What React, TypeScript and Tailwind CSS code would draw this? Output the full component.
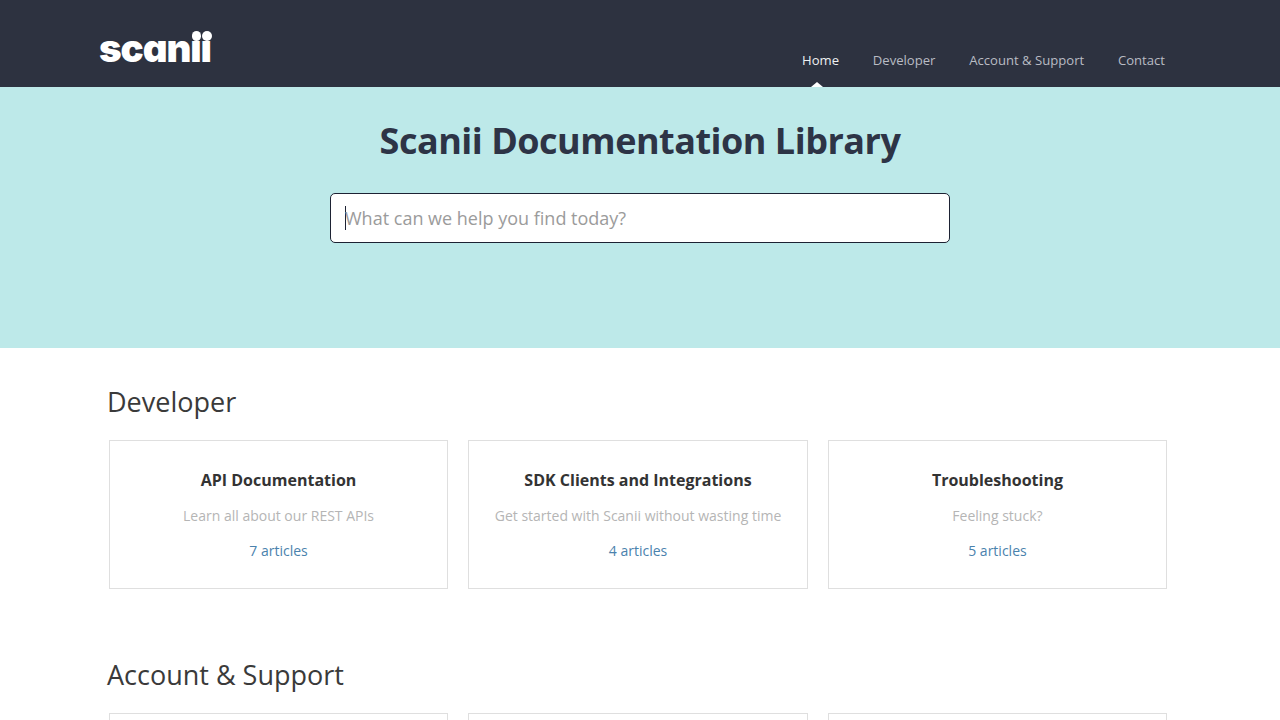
import React from 'react'

const navItems = ['Home', 'Developer', 'Account & Support', 'Contact']

type CardData = { title: string; text: string; count: string }

const developerCards: CardData[] = [
    { title: 'API Documentation', text: 'Learn all about our REST APIs', count: '7 articles' },
    { title: 'SDK Clients and Integrations', text: 'Get started with Scanii without wasting time', count: '4 articles' },
    { title: 'Troubleshooting', text: 'Feeling stuck?', count: '5 articles' },
]

function Card({ title, text, count }: CardData) {
    return (
        <div className="h-[149px] border border-[#dfdfdf] pt-[27px] text-center">
            <h3 className="text-[16px] leading-[24px] font-bold text-[#333333]">{title}</h3>
            <p className="mt-[12px] text-[14px] leading-[24px] text-[#b5b5b5]">{text}</p>
            <p className="mt-[11px] text-[14px] leading-[24px] text-[#4a82ad]">{count}</p>
        </div>
    )
}

export default function App() {
    return (
        <div className="h-[720px] overflow-hidden bg-white font-['Open_Sans',sans-serif]">
            <header className="h-[87px] bg-[#2d3240]">
                <div className="flex h-full justify-between pl-[99px] pr-[115px]">
                    <div className="relative pt-[25px] font-['Inter',sans-serif] text-[38.5px] leading-[46px] font-black tracking-[-1.1px] text-white [font-feature-settings:'cv11']">
                        scanii
                        {/* logo has round dots on the i's */}
                        <span className="absolute top-[27px] left-[90px] h-[14px] w-[25px] bg-[#2d3240]" />
                        <span className="absolute top-[31px] left-[92.5px] h-[9.5px] w-[9.5px] rounded-full bg-white" />
                        <span className="absolute top-[31px] left-[103px] h-[9.5px] w-[9.5px] rounded-full bg-white" />
                    </div>
                    <nav className="flex gap-[33.8px] pt-[48px]">
                        {navItems.map((item, i) => (
                            <a
                                key={item}
                                className={`relative h-[24px] text-[13.1px] leading-[24px] ${i === 0 ? 'text-[#eef0f2]' : 'text-[#b9bcc4]'}`}
                            >
                                {item}
                                {i === 0 && (
                                    <span className="absolute top-[34px] left-1/2 -ml-[9px] h-0 w-0 border-x-[6px] border-b-[5px] border-x-transparent border-b-white" />
                                )}
                            </a>
                        ))}
                    </nav>
                </div>
            </header>

            <section className="h-[261px] bg-[#bde9e9] pt-[29px]">
                <h1 className="text-center text-[36px] leading-[50px] font-bold tracking-[-0.5px] text-[#2d3446]">
                    Scanii Documentation Library
                </h1>
                <div className="mx-auto mt-[27px] flex h-[50px] w-[620px] items-center rounded-[5px] border border-[#1d2233] bg-white pl-[14px] text-[18px] text-[#9b9b9b]">
                    <span className="mr-[-1px] h-[24px] w-px bg-[#1d2233]" />
                    What can we help you find today?
                </div>
            </section>

            <main className="pl-[107px] pr-[113px]">
                <section className="h-[273px] pt-[34px]">
                    <h2 className="text-[27px] leading-[40px] text-[#3a3a3a]">Developer</h2>
                    <div className="mt-[18px] ml-[2px] grid grid-cols-3 gap-x-[20.4px]">
                        {developerCards.map((card) => (
                            <Card key={card.title} {...card} />
                        ))}
                    </div>
                </section>
                <section className="pt-[34px]">
                    <h2 className="text-[27px] leading-[40px] text-[#3a3a3a]">Account &amp; Support</h2>
                    <div className="mt-[18px] ml-[2px] grid grid-cols-3 gap-x-[20.4px]">
                        <div className="h-[149px] border border-[#dfdfdf]" />
                        <div className="h-[149px] border border-[#dfdfdf]" />
                        <div className="h-[149px] border border-[#dfdfdf]" />
                    </div>
                </section>
            </main>
        </div>
    )
}
